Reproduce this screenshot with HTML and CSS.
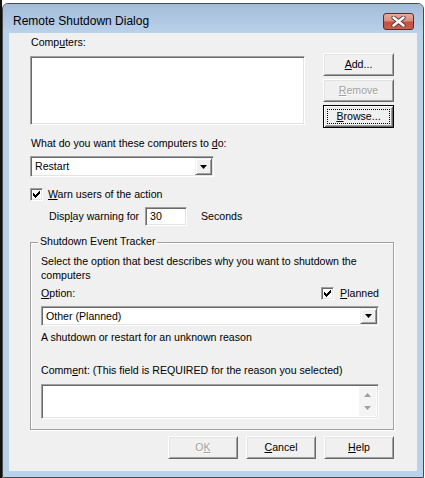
FILE: index.html
```html
<!DOCTYPE html>
<html lang="en">
<head>
    <meta charset="UTF-8">
    <meta name="viewport" content="width=device-width, initial-scale=1.0">
    <title>Remote Shutdown Dialog</title>
    <link rel="stylesheet" href="styles.css">
</head>
<body>
    <!-- Janela -->
    <div class="window">
        <div class="titlebar">
            <span class="title">Remote Shutdown Dialog</span>
            <div class="close">
                <svg width="15" height="11" viewBox="0 0 15 11">
                    <path d="M2.5 1.5 L12.5 9.5 M12.5 1.5 L2.5 9.5" stroke="#5a3a36" stroke-width="4.2" stroke-linecap="round"/>
                    <path d="M2.5 1.5 L12.5 9.5 M12.5 1.5 L2.5 9.5" stroke="#fff" stroke-width="2.4" stroke-linecap="round"/>
                </svg>
            </div>
        </div>

        <div class="client">
            <!-- Computadores -->
            <div class="top-row">
                <div class="list-col">
                    <div class="label">Comp<u>u</u>ters:</div>
                    <div class="field listbox"></div>
                </div>
                <div class="side">
                    <div class="btn"><span><u>A</u>dd...</span></div>
                    <div class="btn disabled"><span><u>R</u>emove</span></div>
                    <div class="btn default"><span class="focus"><u>B</u>rowse...</span></div>
                </div>
            </div>

            <div class="label question">What do you want these computers to <u>d</u>o:</div>
            <div class="field combo small">
                <span class="combo-text">Restart</span>
                <span class="arrow-btn"><svg width="7" height="4" viewBox="0 0 7 4"><path d="M0 0h7l-3.5 4z" fill="#000"/></svg></span>
            </div>

            <div class="check-row">
                <span class="field checkbox">
                    <svg width="9" height="9" viewBox="0 0 9 9"><path d="M7 1h1v1h-1z M6 2h2v1h-2z M1 3h1v1h-1z M5 3h3v1h-3z M1 4h2v1h-2z M4 4h3v1h-3z M1 5h5v1h-5z M2 6h3v1h-3z M3 7h1v1h-1z" fill="#000"/></svg>
                </span>
                <span><u>W</u>arn users of the action</span>
            </div>

            <div class="warn-row">
                <span class="warn-label">Disp<u>l</u>ay warning for</span>
                <span class="field seconds">30</span>
                <span class="unit">Seconds</span>
            </div>

            <!-- Shutdown Event Tracker -->
            <div class="group">
                <span class="legend">Shutdown Event Tracker</span>
                <p class="info">Select the option that best describes why you want to shutdown the computers</p>
                <div class="option-row">
                    <span><u>O</u>ption:</span>
                    <span class="planned">
                        <span class="field checkbox">
                            <svg width="9" height="9" viewBox="0 0 9 9"><path d="M7 1h1v1h-1z M6 2h2v1h-2z M1 3h1v1h-1z M5 3h3v1h-3z M1 4h2v1h-2z M4 4h3v1h-3z M1 5h5v1h-5z M2 6h3v1h-3z M3 7h1v1h-1z" fill="#000"/></svg>
                        </span>
                        <span><u>P</u>lanned</span>
                    </span>
                </div>
                <div class="field combo wide">
                    <span class="combo-text">Other (Planned)</span>
                    <span class="arrow-btn"><svg width="7" height="4" viewBox="0 0 7 4"><path d="M0 0h7l-3.5 4z" fill="#000"/></svg></span>
                </div>
                <div class="label reason">A shutdown or restart for an unknown reason</div>
                <div class="label comment">Comm<u>e</u>nt: (This field is REQUIRED for the reason you selected)</div>
                <div class="field memo">
                    <div class="scrollbar">
                        <svg width="7" height="4" viewBox="0 0 7 4"><path d="M3.5 0l3.5 4h-7z" fill="#a0a0a0"/></svg>
                        <svg width="7" height="4" viewBox="0 0 7 4"><path d="M0 0h7l-3.5 4z" fill="#a0a0a0"/></svg>
                    </div>
                </div>
            </div>

            <!-- Botoes -->
            <div class="bottom">
                <div class="btn disabled"><span>O<u>K</u></span></div>
                <div class="btn"><span><u>C</u>ancel</span></div>
                <div class="btn"><span><u>H</u>elp</span></div>
            </div>
        </div>
    </div>
</body>
</html>
```

FILE: styles.css
```css
body{ margin: 0; background: linear-gradient(90deg, #111 2px, #fff 2px); font-family: "Liberation Sans", Arial, sans-serif; font-size: 10.6px; color: #000; }
u{ text-underline-offset: 1px; }

.window{ margin: 3px 0 0 2px; width: 422px; height: 475px; box-sizing: border-box; border: 1px solid #4a4a4a; border-radius: 6px 6px 0 0; background: #b9d1ea; display: flex; flex-direction: column; }
.titlebar{ height: 29px; flex: none; display: flex; justify-content: space-between; align-items: flex-start; background: linear-gradient(#a3bcd8, #bad1ea); border-radius: 5px 5px 0 0; }
.title{ font-size: 12px; line-height: 16px; padding: 9px 0 0 10px; }
.close{ width: 29px; height: 15px; margin: 9px 9px 0 0; border: 1px solid #5b2b27; border-radius: 3px; background: linear-gradient(#e6aa9b 0%, #d9907f 45%, #c5503f 55%, #c85e4c 100%); display: flex; align-items: center; justify-content: center; }

.client{ flex: 1; margin: 0 6px 6px; background: #f0f0f0; padding: 3px 23px 0 21px; }
.label{ line-height: 13px; padding-left: 1px; }

.field{ background: #fff; border: 1px solid; border-color: #a0a0a0 #fff #fff #a0a0a0; box-shadow: inset 1px 1px 0 #696969, inset -1px -1px 0 #e3e3e3; box-sizing: border-box; }

.top-row{ display: flex; justify-content: space-between; }
.list-col{ width: 275px; }
.listbox{ height: 69px; margin-top: 7px; }
.side{ width: 71px; margin-top: 17px; display: flex; flex-direction: column; gap: 3px; }

.btn{ height: 23px; box-sizing: border-box; border: 1px solid; border-color: #fff #696969 #696969 #fff; box-shadow: inset 1px 1px 0 #e3e3e3, inset -1px -1px 0 #a0a0a0; background: #f0f0f0; display: flex; align-items: center; justify-content: center; line-height: 13px; }
.btn.disabled{ color: #a0a0a0; text-shadow: 1px 1px 0 #fff; }
.btn.default{ border: 1px solid #000; box-shadow: inset 1px 1px 0 #fff, inset -1px -1px 0 #696969, inset 2px 2px 0 #e3e3e3, inset -2px -2px 0 #a0a0a0; }
.focus{ flex: 1; align-self: stretch; margin: 3px; border: 1px dotted #000; display: flex; align-items: center; justify-content: center; }

.question{ margin-top: 9px; }
.combo{ height: 21px; padding: 1px; display: flex; align-items: center; }
.combo.small{ width: 184px; margin-top: 6px; }
.combo.wide{ height: 20px; margin-top: 6px; }
.combo-text{ flex: 1; padding-left: 3px; line-height: 13px; }
.arrow-btn{ width: 17px; align-self: stretch; box-sizing: border-box; border: 1px solid; border-color: #f0f0f0 #696969 #696969 #f0f0f0; box-shadow: inset 1px 1px 0 #fff, inset -1px -1px 0 #a0a0a0; background: #f0f0f0; display: flex; align-items: center; justify-content: center; }

.check-row{ margin-top: 11px; display: flex; align-items: center; gap: 5px; line-height: 13px; }
.checkbox{ width: 13px; height: 13px; display: inline-flex; align-items: center; justify-content: center; flex: none; }

.warn-row{ margin-top: 6px; padding-left: 19px; display: flex; align-items: center; line-height: 13px; }
.warn-label{ width: 96px; }
.seconds{ width: 42px; height: 19px; padding-left: 4px; display: flex; align-items: center; }
.unit{ margin-left: 14px; }

.group{ position: relative; margin-top: 16px; height: 188px; box-sizing: border-box; border: 1px solid #a0a0a0; box-shadow: inset 1px 1px 0 #fff, 1px 1px 0 #fff; padding: 11px 14px 10px 10px; }
.legend{ position: absolute; top: -8px; left: 7px; padding: 0 2px; background: #f0f0f0; line-height: 13px; }
.info{ margin: 0; line-height: 14px; }
.option-row{ margin-top: 5px; display: flex; justify-content: space-between; align-items: center; line-height: 13px; }
.planned{ display: flex; align-items: center; gap: 6px; }
.reason{ margin-top: 5px; padding-left: 0; }
.comment{ margin-top: 20px; padding-left: 0; }
.memo{ height: 35px; margin-top: 7px; padding: 2px; display: flex; justify-content: flex-end; }
.scrollbar{ width: 17px; background: #f4f4f4; display: flex; flex-direction: column; justify-content: space-between; align-items: center; padding: 6px 0; box-sizing: border-box; }

.bottom{ margin-top: 6px; display: flex; justify-content: flex-end; gap: 8px; }
.bottom .btn{ width: 70px; }
```
